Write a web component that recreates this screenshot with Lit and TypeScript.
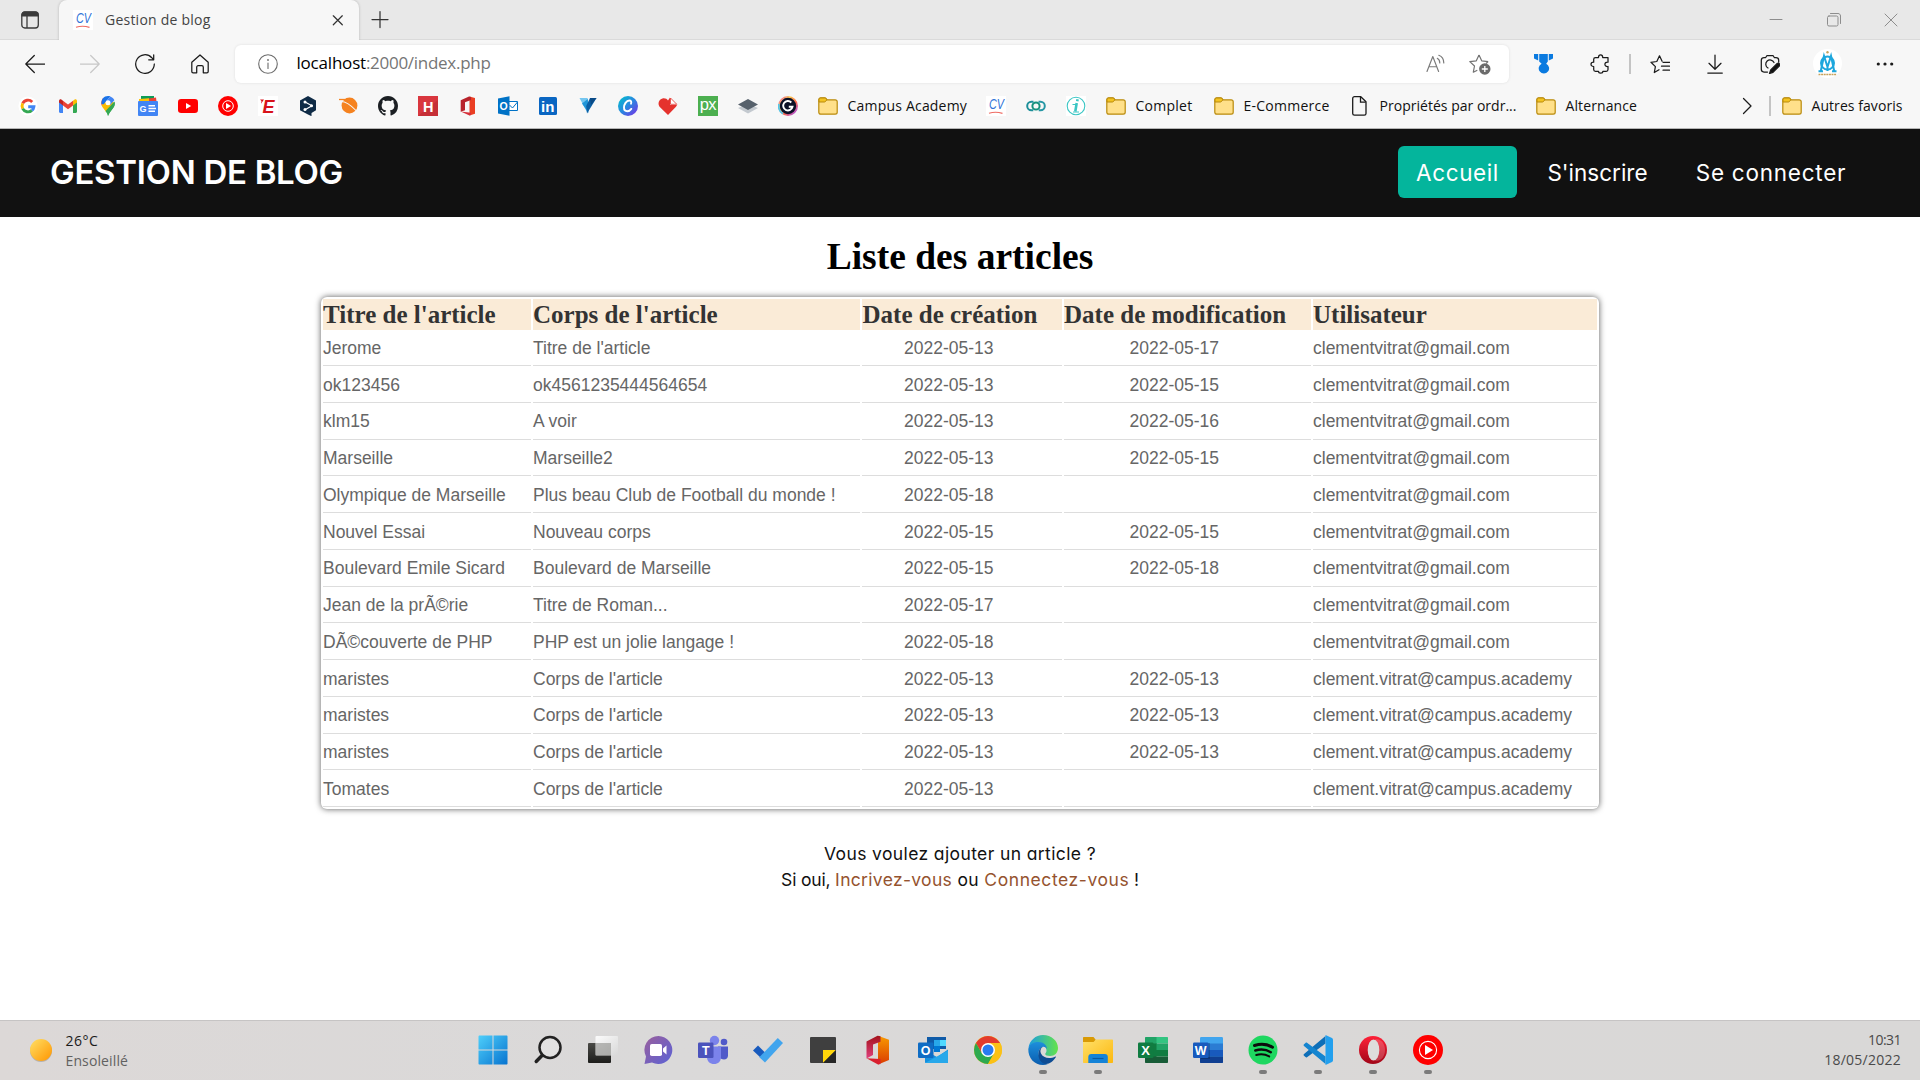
import { LitElement, html, svg, css, nothing } from "lit";
import { customElement } from "lit/decorators.js";

const icon = (size: number, body: unknown, box = size) =>
  html`<svg class="icon" width=${size} height=${size} viewBox="0 0 ${box} ${box}" fill="none">${body}</svg>`;

/* ---------- bookmark icons, 20 x 20 ---------- */
const google = icon(20, svg`<circle cx="10" cy="10" r="9.600" fill="#fff"/><g stroke-width="2.900"><path stroke="#ea4335" d="M14.200 5.900A5.900 5.900 0 0 0 4.700 7.400"/><path stroke="#fbbc05" d="M4.700 7.400a5.900 5.900 0 0 0 0 5.200"/><path stroke="#34a853" d="M4.700 12.600a5.900 5.900 0 0 0 9.200 1.800"/><path stroke="#4285f4" d="M13.900 14.400A5.900 5.900 0 0 0 15.900 10.700H10.200"/></g>`);
const gmail = icon(20, svg`<path fill="#4285f4" d="M1 5.500 5 8.400V17H2.300C1.500 17 1 16.500 1 15.800z"/><path fill="#34a853" d="M19 5.500 15 8.400V17h2.700c.8 0 1.300-.5 1.300-1.200z"/><path fill="#fbbc04" d="M15 4.800 16.400 3.700C17.500 2.900 19 3.600 19 5v1.500L15 9.500z"/><path fill="#c5221f" d="M5 4.800 3.600 3.700C2.500 2.900 1 3.600 1 5v1.500L5 9.500z"/><path fill="#ea4335" d="M5 4.800 10 8.500l5-3.700v4.700l-5 3.800-5-3.800z"/>`);
const maps = icon(20, svg`<path fill="#fbbc04" d="M5.400 11.800 13 3.500l3.300 3.800L8.200 15.300z"/><path fill="#34a853" d="M8 15 16.500 6c.6 2.300-.2 4.300-1.500 6-2 2.800-4 5-5 8-.3-2-1-3.500-2-5z"/><path fill="#ea4335" d="M3.600 9.500C2.800 7 3.500 4.200 5 2.300l3.600 3z"/><path fill="#fbbc04" d="M3.600 9.500 7 6l6 5-4.800 5.300C7 13.500 4.500 12 3.600 9.500z"/><path fill="#34a853" d="M7.500 15 16.500 5.500c.8 2.300.2 4.600-1.500 6.800-2 2.700-4 4.700-5 7.700-.4-2-1.300-3.500-2.500-5z"/><path fill="#1a73e8" d="M5 2.300C6.200.8 8 0 10 0c.8 0 1.600.1 2.300.4L5.600 8.200 3.500 8C3.200 6 3.800 4 5 2.300z"/><path fill="#4285f4" d="M12.300.4c1.900.7 3.300 2 4.100 3.900L12 9 8.200 5.300z"/><circle cx="10" cy="6.700" r="2.500" fill="#fff"/>`);
const gnews = icon(20, svg`<path fill="#0c9d58" d="M3 0h13v6H3z"/><path fill="#ea4335" d="M8 3 18 1.500l.6 5H8z"/><path fill="#ffc107" d="M1 3l10-.8V8H1z"/><rect y="5" width="20" height="15" rx="1" fill="#4285f4"/><text x="1.600" y="15.800" class="g-bold" font-size="9" fill="#fff">G</text><path stroke="#fff" stroke-width="1.600" d="M10.500 9.700H17M10.500 12.500H18M10.500 15.300H17"/>`);
const youtube = icon(20, svg`<rect y="3" width="20" height="14" rx="3.200" fill="#f00"/><path fill="#fff" d="M8 7v6l5.200-3z"/>`);
const ytMusic = icon(20, svg`<circle cx="10" cy="10" r="10" fill="#f00"/><circle cx="10" cy="10" r="5.300" stroke="#fff"/><path fill="#fff" d="M8 7v6l5-3z"/>`);
const equipe = icon(20, svg`<path fill="#fff" d="M0 0h20v20H0z"/><text x="4.500" y="16.500" class="g-bold" font-style="italic" font-size="18" fill="#d8131b">E</text><path fill="#d8131b" d="M2 3.500h4L3 7.800 3.500 5z"/>`);
const deepl = icon(20, svg`<path fill="#0f2b46" d="M10 0l8 4.500v9.800L13.500 17v3.200L10 18.500 2 14.300V4.500z"/><path stroke="#fff" stroke-width="1.100" d="M7 6l7 3.700-7 4"/><g fill="#fff"><circle cx="7" cy="6" r="1.500"/><circle cx="13.500" cy="9.700" r="1.500"/><circle cx="7" cy="13.600" r="1.500"/></g>`);
const saturn = icon(20, svg`<circle cx="11.500" cy="9.500" r="7.900" fill="#f5821f"/><path stroke="#f5821f" stroke-width="1.300" d="M1 3.500h9"/><path stroke="#f7f7f7" stroke-width="1.100" d="M2 5.500C7 5 12 8 18.500 15"/>`);
const github = icon(20, svg`<path fill="#1b1f23" transform="scale(1.25)" d="M8 0C3.580 0 0 3.580 0 8c0 3.540 2.290 6.530 5.470 7.590.4.070.550-.170.550-.380 0-.190-.010-.820-.010-1.490-2.010.370-2.530-.490-2.690-.940-.090-.230-.480-.940-.820-1.130-.280-.150-.680-.520-.010-.530.630-.010 1.080.580 1.230.820.720 1.210 1.870.870 2.330.660.070-.520.280-.870.510-1.070-1.780-.2-3.640-.890-3.640-3.950 0-.870.310-1.590.820-2.150-.080-.2-.360-1.020.080-2.120 0 0 .670-.210 2.200.820.640-.180 1.320-.270 2-.270s1.360.090 2 .270c1.530-1.040 2.200-.820 2.200-.820.440 1.100.160 1.920.080 2.120.510.560.820 1.270.820 2.150 0 3.070-1.870 3.750-3.650 3.950.290.250.540.730.540 1.480 0 1.070-.010 1.930-.010 2.200 0 .210.150.460.550.380A8.010 8.010 0 0 0 16 8c0-4.420-3.580-8-8-8z"/>`);
const hBox = icon(20, svg`<path fill="#d9363e" d="M0 0h20v20H0z"/><path fill="#b3282f" opacity=".5" d="M0 20 20 4v16z"/><text x="5" y="15.500" class="g-bold" font-size="14.500" fill="#fff">H</text>`);
const office = icon(20, svg`<path fill="#ea3e23" d="M11.500.500 17 2.100v15.700L11.500 19.500z"/><path fill="#b8232c" d="M2.700 4.300 11 .600l2 .5v3L7 6.300v8l-4.300 1.500z"/><path fill="#d6303a" d="M2.700 15.600 13 16.800v2.300l-1.500.400z"/>`);
const outlookOld = icon(20, svg`<path fill="#0072c6" d="M0 2.500 11.500.200v19.600L0 17.500z"/><path fill="#fff" stroke="#0072c6" d="M11 5.500h8.500v9H11z"/><path stroke="#0072c6" d="M11.500 9l3 3 5-6"/><text x="1.500" y="13.800" class="g-bold" font-size="10.500" fill="#fff">O</text>`);
const linkedin = icon(20, svg`<rect x="1" y="1" width="18" height="18" rx="1.500" fill="#0a66c2"/><text x="3" y="16" class="g-bold" font-size="15" fill="#fff">in</text>`);
const vFav = icon(20, svg`<path fill="#74c6f0" d="M1.500 2h8l1.500 8-1.500 7z"/><path fill="#2196d8" d="M4 7.500 9.800 3l.7 14z"/><path fill="#0b5fa5" d="M9 17.500 18.500 2H12l-3.800 8z"/><path fill="#0a4a86" d="M12 2h6.500L13 9z"/>`);
const canva = icon(20, svg`<defs><linearGradient id="cv" x1="0" y1="0" x2="1" y2="1"><stop stop-color="#00c4cc"/><stop offset=".5" stop-color="#2a86e0"/><stop offset="1" stop-color="#7d2ae8"/></linearGradient></defs><circle cx="10" cy="10" r="10" fill="url(#cv)"/><path stroke="#fff" stroke-width="1.900" stroke-linecap="round" d="M13 7.700C13.800 5.500 12.800 4.500 11.300 4.500 8.300 4.500 6 8.500 6 11.500c0 2.300 1.300 3.700 3.200 3.700 1.700 0 3.200-1 4.100-2.300"/>`);
const heart = icon(20, svg`<path fill="#e5322d" d="M10 19 1.800 11C-.5 8.500.3 3.500 4.500 2.500 7 2 9 3 10 4.500l2-3V9h7c-.3 1-1 1.700-1.500 2.300z"/><path fill="#fff" stroke="#e5322d" stroke-width=".8" d="M12.500 2 18.800 8.300h-6.300z"/>`);
const px = icon(20, svg`<path fill="#4caf50" d="M0 0h20v20H0z"/><text x="1.700" y="14.300" font-family="Liberation Sans" font-size="16.500" letter-spacing="-.6" fill="#fff">px</text>`);
const layers = icon(20, svg`<path fill="#c3c9cf" d="M0 12l10 5.500L20 12l-10-4z"/><path fill="#56616c" d="M0 8.500 10 3l10 5.500-10 5.500z"/>`);
const gRing = icon(20, svg`<defs><linearGradient id="rg" x1="0" y1="0" x2="1" y2="1"><stop stop-color="#f04fb1"/><stop offset=".3" stop-color="#f9c74f"/><stop offset=".6" stop-color="#ff6b4a"/><stop offset="1" stop-color="#9b4dff"/></linearGradient></defs><circle cx="10" cy="10" r="9.100" fill="#0b1026" stroke="url(#rg)" stroke-width="1.800"/><path stroke="#54c7ec" stroke-width="1.800" d="M1 8A9.100 9.100 0 0 0 5 17.700"/><path stroke="#fff" stroke-width="1.900" d="M13.300 6.500A4.700 4.700 0 1 0 14.500 10.700h-3.700"/>`);
const folder = icon(20, svg`<path fill="#ffe08a" stroke="#b98a0c" stroke-width="1.200" d="M.8 3.800C.8 2.500 1.500 1.900 2.700 1.900h4c.8 0 1.200.3 1.600.9l.6 1h8.200c1.300 0 2.100.7 2.100 2v10.500c0 1.200-.8 1.900-2.100 1.900H2.900c-1.300 0-2.100-.7-2.100-1.900z"/><path fill="#f3c321" stroke="#b98a0c" stroke-width="1" d="M1 6V3.800C1 2.600 1.700 2 2.800 2h3.900c.8 0 1.200.3 1.500.8l.6 1L7.500 5.500c-.3.4-.7.500-1.200.5z"/>`);
const cvFav = icon(20, svg`<path fill="#fff" d="M0 0h20v20H0z"/><text x="3" y="12.500" font-family="Liberation Sans" font-style="italic" font-size="14.500" textLength="15" lengthAdjust="spacingAndGlyphs" fill="#2f73d8">CV</text><path stroke="#ef6b63" stroke-width="1.200" d="M3 17.300c4-1.300 9-1.300 13.500 0"/>`);
const rings = icon(20, svg`<g stroke-width="2"><circle cx="10" cy="10" r="3.600" stroke="#16917c"/><path stroke="#1d8f9a" d="M7.500 5.800H5.400a4.200 4.200 0 0 0 0 8.400h1.900"/><path stroke="#2697a5" d="M12.500 5.800h2.100a4.200 4.200 0 0 1 0 8.400h-1.900"/></g>`);
const iTeal = icon(20, svg`<path fill="#fff" d="M0 0h20v20H0z"/><circle cx="10" cy="10" r="8.800" stroke="#3cc6c4" stroke-width="1.100"/><path stroke="#3cc6c4" stroke-width="2.600" d="M10.700 7 9.300 15.500M11.600 3.200l-.4 2"/><path stroke="#3cc6c4" stroke-width="1" d="M6.500 8.500h4M7 16h6"/>`);
const page = icon(20, svg`<path stroke="#1b1b1b" stroke-width="1.300" stroke-linejoin="round" d="M4.500.7h6.300l5.200 5v11.800c0 1-.7 1.700-1.700 1.700H4.500c-1 0-1.800-.7-1.800-1.700V2.400c0-1 .8-1.700 1.800-1.700z"/><path stroke="#1b1b1b" stroke-width="1.300" d="M10.500.9v5.200h5.300"/>`);

/* ---------- toolbar icons ---------- */
const ink = "#1b1b1b";
const line = (body: unknown, color = ink, w = 1.25, size = 20) =>
  icon(size, svg`<g stroke=${color} stroke-width=${w} stroke-linecap="round" stroke-linejoin="round">${body}</g>`);
const tabActions = icon(20, svg`<rect x="1.800" y="2" width="16.500" height="16" rx="3" stroke="#3b3b3b" stroke-width="1.300"/><path fill="#3b3b3b" d="M1.500 6.500V4.500C1.500 2.800 2.800 1.500 4.500 1.500h11c1.700 0 3 1.300 3 3v2z"/><path stroke="#3b3b3b" stroke-width="1.300" d="M7 6v12"/>`);
const closeTab = line(svg`<path d="M5.300 5.800l9 9M14.300 5.800l-9 9"/>`, "#333");
const plus = line(svg`<path d="M10 1.500v16M2 9.500h16"/>`, "#333");
const back = line(svg`<path d="M19.500 10H.8M9.300 1.500.8 10l8.500 8.500"/>`);
const forward = line(svg`<path d="M.5 10h18.700M10.700 1.500 19.200 10l-8.500 8.500"/>`, "#c8c8c8");
const reload = line(svg`<path d="M19.300 10A9.300 9.300 0 1 1 16.800 3.700l1.500 1.700M18.700.8v5h-5"/>`);
const home = line(svg`<path d="M1.800 8.300 10 1l8.200 7.300v9.200c0 .8-.5 1.300-1.300 1.300h-3.600v-5.500c0-1-.6-1.600-1.500-1.600H8.200c-.9 0-1.500.6-1.500 1.600v5.500H3.100c-.8 0-1.300-.5-1.300-1.300z"/>`);
const info = line(svg`<circle cx="10" cy="10" r="9.300"/><path d="M10 9v5.500"/><path stroke-width="1.800" d="M10 5.900v.1"/>`, "#6b6b6b", 1.1);
const readAloud = line(svg`<path d="M1 17.500 6.800 2.500l5.800 15M3 12.700h7.700M11.300 4.300c1.700.9 2.500 2.600 2.500 4.700M12.800 1.300c3.300 1.200 5 3.900 5 7.700"/>`, "#7a7a7a", 1.15);
const starAdd = html`<svg class="icon" width="24" height="24" viewBox="0 0 24 24" fill="none"><path stroke="#737373" stroke-width="1.200" stroke-linejoin="round" d="M11 3l2.700 5.800 6.500.8M11 3 8.300 8.800l-6.500.8 4.700 4.400-1.200 6.200 4-2M20 9.700l-2 1.800"/><circle cx="16.800" cy="17" r="5.700" fill="#6b6b6b"/><path stroke="#fff" stroke-width="1.300" d="M16.800 14v6M13.800 17h6"/></svg>`;
const medal = icon(22, svg`<path fill="#0a7ae0" d="M1 1h4.200v6.500L1 5.500zM6.200 1h8.600v7.500l-1.600 2.200a5.200 5.200 0 1 1-4.600 0L6.200 8.500zM15.800 1H20v4.500l-4.200 2z"/>`);
const puzzle = line(svg`<path d="M5.500 3.500h3c0-1.800.8-2.700 2.100-2.700s2.100.9 2.100 2.700H18v4.700c-2-.2-3.100.6-3.100 2.100s1.100 2.400 3.100 2.200v3c0 1.200-.6 1.800-1.800 1.800h-3.300c0 1.200-.9 1.900-2.200 1.900s-2.200-.7-2.200-1.900H5.500c-1.200 0-1.800-.6-1.800-1.800v-3C2 12.500 1 11.600 1 10.300s1-2.100 2.700-2.100V5.300c0-1.200.6-1.800 1.800-1.800z"/>`);
const favs = line(svg`<path d="M9 15.700l-4.700 2.800 1.100-5.900L1 8.300l5.800-.8L9.500 1.800l2.600 5.500M13 8.300h6.500M11.500 12.200h8M13 16.200h6.500"/>`);
const download = line(svg`<path d="M10 1v14M4 9.300l6 6 6-6M2.800 19h14.500"/>`);
const capture = line(svg`<path d="M7.500 18H4c-1.500 0-2.700-1-2.700-2.700V6.200C1.300 4.700 2.500 3.500 4 3.500h1.700L7 1.500h6l1.300 2H16c1.500 0 2.700 1.200 2.700 2.700v2M8 14A4.300 4.300 0 1 1 14 8.500"/><path fill="#111" d="M17.200 9.500c1.500-1 3.300.8 2.300 2.300l-6.500 6.500-3.500 1.200 1.200-3.500z"/>`);
const avatar = icon(29, svg`<circle cx="14.500" cy="14.500" r="14.500" fill="#fff"/><circle cx="14.500" cy="3.300" r="1.200" fill="#c7a25c"/><g stroke="#1ea7dd"><circle cx="14.500" cy="14" r="6.500" stroke-width="2"/><path stroke-width="2" d="M7.800 22 11 7l3.500 11L18 7l3.200 15M5.500 22.300h4.500M19 22.300h4.500M14.500 18v4"/></g><path stroke="#c7a25c" stroke-width="1.300" stroke-dasharray="2 .6" d="M5.500 25.500h18"/>`);
const dots = icon(20, svg`<g fill="#1b1b1b"><circle cx="3.300" cy="10" r="1.600"/><circle cx="10" cy="10" r="1.600"/><circle cx="16.700" cy="10" r="1.600"/></g>`);
const chevron = line(svg`<path d="M6.500 2.500 14 10l-7.500 7.500"/>`);
const winMin = line(svg`<path d="M4 9.500h12"/>`, "#8d8d8d", 1);
const winMax = line(svg`<rect x="3.500" y="6" width="10.500" height="10" rx="1.500"/><path d="M6.500 3.500H14c1.400 0 2.500 1 2.500 2.500v7.500"/>`, "#8d8d8d", 1);
const winClose = line(svg`<path d="M4 4l12 12M16 4 4 16"/>`, "#8d8d8d", 1);

/* ---------- taskbar icons, 30 x 30 ---------- */
const lg = (id: string, a: string, b: string, dir = "d") =>
  svg`<linearGradient id=${id} x1="0" y1="0" x2=${dir === "v" ? 0 : 1} y2=${dir === "h" ? 0 : 1}><stop stop-color=${a}/><stop offset="1" stop-color=${b}/></linearGradient>`;
const start = icon(30, svg`<defs><linearGradient id="st" gradientUnits="userSpaceOnUse" x1="0" y1="0" x2="30" y2="30"><stop stop-color="#4fd0fb"/><stop offset="1" stop-color="#0672cf"/></linearGradient></defs><path fill="url(#st)" d="M.5 1.500C.5 1 1 .5 1.500.5h13v14H.5zM15.500.5h13c.6 0 1 .4 1 1v13h-14zM.5 15.500h14v14h-13c-.6 0-1-.4-1-1zM15.500 15.500h14v13c0 .6-.4 1-1 1h-13z"/>`);
const search = icon(30, svg`<circle cx="17" cy="12.500" r="10.500" fill="#e6e6e6" fill-opacity=".6" stroke="#222" stroke-width="2.500"/><path stroke="#222" stroke-width="3.400" stroke-linecap="round" d="M9 20.500 3.200 26.500"/>`);
const taskView = icon(30, svg`<defs>${lg("tv", "#4a4a46", "#1d1d1b", "v")}${lg("tw", "#fff", "#d8d8d8")}</defs><rect y="8" width="23" height="20" rx="1" fill="url(#tv)"/><rect x="7.500" y="1" width="22.500" height="19.500" rx="1" fill="url(#tw)" fill-opacity=".9"/><path fill="#8f8f8d" opacity=".55" d="M7.500 8H23v12.500H7.500z"/>`);
const chat = icon(30, svg`<defs>${lg("ch", "#9a5f9c", "#5b62d6")}</defs><path fill="url(#ch)" d="M15.500 1A14 14 0 1 1 9 27.500L1.500 29 3 21.500A14 14 0 0 1 15.500 1z"/><rect x="7" y="9" width="12" height="12" rx="1.800" fill="#fff"/><path fill="#fff" d="M20 13.500l3.500-3v9l-3.500-3z"/>`);
const teams = icon(30, svg`<circle cx="16.500" cy="5.500" r="4.700" fill="#7b83eb"/><circle cx="26" cy="7" r="3.300" fill="#5059c9"/><path fill="#5059c9" d="M20 11.500h10v9c0 2.500-1.800 4-4 4s-4-1-5-3z"/><path fill="#7b83eb" d="M9 11.500h14V22c0 4.500-3 7-7 7s-7-2.500-7-7z"/><rect y="7.500" width="15.500" height="15.500" rx="1.200" fill="#4b53bc"/><text x="7.700" y="19.800" text-anchor="middle" class="g-bold" font-size="12.500" fill="#fff">T</text>`);
const todo = icon(30, svg`<path fill="#185abd" d="M0 15.500l5-5 8 8-3.500 6z"/><path fill="#41a5ee" d="M6.300 22.200 24.800 3l5.200 5L12 27.500z"/>`);
const sticky = icon(30, svg`<rect x="2" y="2" width="26" height="26" rx="1" fill="#3f3f3f"/><path fill="#ffd60a" d="M15 15h13L15 28z"/><path fill="#262626" d="M28 15v13H15z"/>`);
const officeBig = icon(30, svg`<defs>${lg("of", "#a4131c", "#e0407e", "v")}${lg("og", "#f89a00", "#da3b01", "v")}</defs><path fill="url(#og)" d="M15 .8l11 4V25L15 29.500z"/><path fill="url(#of)" d="M3.500 6.500 14.500.8l3 .5v5.500L10 9.500v10.500l-6.500 3.500z"/><path fill="#d9202f" d="M3.500 23.300 17.500 24v5l-2.500.5z"/>`);
const outlook = icon(30, svg`<path fill="#0f5ba8" d="M9 2h19v12H9z"/><path fill="#28a8ea" d="M16 5h6v6h-6z"/><path fill="#50d9ff" d="M22 5h6v6h-6z"/><path fill="#0078d4" d="M16 11h6v6h-6z"/><path fill="#1490df" d="M7 15.500 19 22l11-7.500V27c0 .6-.4 1-1 1H8c-.6 0-1-.4-1-1z"/><path fill="#28a8ea" d="M7 28 30 15.500V27c0 .6-.4 1-1 1z"/><rect y="7.500" width="15.500" height="15.500" rx="1.200" fill="#0f6cc4"/><text x="7.700" y="19.700" text-anchor="middle" class="g-bold" font-size="12.500" fill="#fff">O</text>`);
const chrome = icon(30, svg`<circle cx="15" cy="15" r="14" fill="#fbc116"/><path fill="#e33b2e" d="M2.900 8A14 14 0 0 1 27.100 8H15L9 18.500z"/><path fill="#2da94f" d="M2.900 8A14 14 0 0 0 15 29l6-10.500H9z"/><path fill="#fbc116" d="M27.100 8A14 14 0 0 1 15 29l6-10.500L15 8z"/><circle cx="15" cy="15" r="7" fill="#fff"/><circle cx="15" cy="15" r="5.500" fill="#2a7bf0"/>`);
const edge = icon(30, svg`<defs>${lg("e1", "#1b9de2", "#63e34a", "h")}${lg("e2", "#1d8fdc", "#0a5cae", "v")}</defs><path fill="url(#e1)" d="M.5 12.500C1.700 5.500 7.500 0 15 0c8.500 0 15 6 15 13 0 5-3.500 8-7.800 8-3.200 0-5-1-5-2 0-.7 1.300-1.300 1.300-3.500 0-3.500-3.500-6.300-8-6.300-5 0-8.500 1.500-10 3.300z"/><path fill="url(#e2)" d="M.3 14C1 9.500 5.500 7 10.300 7c5.500 0 8.700 3.500 8.700 7-1-1.500-3-2.500-4.500-2-3 1-4.500 4.500-3.500 8.500 1 4.500 5 8 9 8.500-1.500.7-3.300 1-5 1C6.500 30 0 23 .3 14z"/><path fill="#0e4c93" d="M10.500 18.500C11 13 14 12 14.500 12c-2 1.500-2.700 4-1.500 6.500 2 4.500 8.500 6 14.500 3 .5 0 .5.500.3.800C25.500 26 22 29 18 29c-4.500-.5-8-4.500-7.500-10.500z"/>`);
const explorer = icon(30, svg`<defs>${lg("fo", "#ffe069", "#fcb80f")}</defs><path fill="#d99a05" d="M0 3c0-.6.4-1 1-1h9.500l2 2.500V8H0z"/><path fill="url(#fo)" d="M0 7h10.500l2.500-2.500h16c.6 0 1 .4 1 1V27c0 .6-.4 1-1 1H1c-.6 0-1-.4-1-1z"/><path fill="#1583d7" d="M5.300 28v-6c0-2 1-3 3-3h13.500c2 0 3 1 3 3v6z"/><path stroke="#0c5aa0" stroke-width="1.200" d="M9.500 23.500h11"/>`);
const excel = icon(30, svg`<path fill="#21a366" d="M7 3c0-.6.4-1 1-1h11v13H7z"/><path fill="#33c481" d="M18.500 2H29c.6 0 1 .4 1 1v5.500H18.500z"/><path fill="#21a366" d="M18.500 8.500H30V15H18.500z"/><path fill="#185c37" d="M7 15h11.500v6.500H30V27c0 .6-.4 1-1 1H8c-.6 0-1-.4-1-1z"/><path fill="#107c41" d="M18.500 15H30v6.500H18.500zM7 8.500h11.500V21.500H7z"/><rect y="7.500" width="15.500" height="15.500" rx="1.200" fill="#107c41"/><text x="7.700" y="19.800" text-anchor="middle" class="g-bold" font-size="13" fill="#fff">X</text>`);
const word = icon(30, svg`<rect x="7" y="2" width="23" height="26" rx="1.200" fill="#41a5ee"/><path fill="#2b7cd3" d="M7 8.500h23V15H7z"/><path fill="#185abd" d="M7 15h23v6.500H7z"/><path fill="#103f91" d="M7 21.500h23V27c0 .6-.4 1-1 1H8c-.6 0-1-.4-1-1z"/><path fill="#000" opacity=".2" d="M8 8h9v16H8z"/><rect y="7.500" width="15.500" height="15.500" rx="1.200" fill="#185abd"/><text x="7.700" y="19.800" text-anchor="middle" class="g-bold" font-size="12.500" fill="#fff">W</text>`);
const spotify = icon(30, svg`<circle cx="15" cy="15" r="14.500" fill="#1ed760"/><g stroke="#0c0c0c" stroke-linecap="round"><path stroke-width="3" d="M6.500 10.500c6-1.800 13-1.200 18 1.700"/><path stroke-width="2.500" d="M7.300 15.500c5-1.500 11-1 15.500 1.700"/><path stroke-width="2" d="M8.200 20c4.500-1.200 9-.8 13 1.400"/></g>`);
const vscode = icon(30, svg`<path fill="#0e6fb8" d="M22.500 1 1 19c-.6.6-.6 1.200 0 1.700l1.500 1.400c.5.400 1 .4 1.500.1L22.500 8.500z"/><path fill="#1585d0" d="M22.500 29 1 11c-.6-.6-.6-1.200 0-1.700l1.500-1.400c.5-.4 1-.4 1.500-.1L22.500 21.500z"/><path fill="#23a0ee" d="M22.500 0 29 3c.6.3 1 .9 1 1.500v21c0 .6-.4 1.200-1 1.500l-6.500 3z"/>`);
const opera = icon(30, svg`<defs>${lg("op", "#ff2138", "#a10618", "v")}</defs><circle cx="15" cy="15" r="14" fill="url(#op)"/><path fill="#fff" opacity=".2" d="M17 4.500C23 3 27 9 27 15s-4 12-10 10.500z"/><ellipse cx="15.500" cy="15" rx="5.800" ry="10.500" fill="#dedcdc"/>`);
const music = icon(30, svg`<circle cx="15" cy="15" r="15" fill="#f00"/><circle cx="15" cy="15" r="8.600" stroke="#fff" stroke-width="1.100"/><path fill="#fff" d="M12 10v10l8-5z"/>`);
const sun = icon(26, svg`<defs>${lg("su", "#ffe066", "#ff9500")}</defs><circle cx="13" cy="14" r="11" fill="#000" opacity=".18"/><circle cx="13" cy="13" r="11" fill="url(#su)"/>`);

type Bookmark = { art: unknown; label?: string; cls?: string };
const bookmarks: Bookmark[] = [
  ...[google, gmail, maps, gnews, youtube, ytMusic, equipe, deepl, saturn, github, hBox, office, outlookOld,
    linkedin, vFav, canva, heart, px, layers, gRing].map((art) => ({ art })),
  { art: folder, label: "Campus Academy", cls: "b-campus" },
  { art: cvFav }, { art: rings }, { art: iTeal },
  { art: folder, label: "Complet", cls: "b-complet" },
  { art: folder, label: "E-Commerce", cls: "b-ecom" },
  { art: page, label: "Propriétés par ordr...", cls: "b-prop" },
  { art: folder, label: "Alternance", cls: "b-alt" },
];

const G = "clementvitrat@gmail.com";
const C = "clement.vitrat@campus.academy";
const articles: string[][] = [
  ["Jerome", "Titre de l'article", "2022-05-13", "2022-05-17", G],
  ["ok123456", "ok4561235444564654", "2022-05-13", "2022-05-15", G],
  ["klm15", "A voir", "2022-05-13", "2022-05-16", G],
  ["Marseille", "Marseille2", "2022-05-13", "2022-05-15", G],
  ["Olympique de Marseille", "Plus beau Club de Football du monde !", "2022-05-18", "", G],
  ["Nouvel Essai", "Nouveau corps", "2022-05-15", "2022-05-15", G],
  ["Boulevard Emile Sicard", "Boulevard de Marseille", "2022-05-15", "2022-05-18", G],
  ["Jean de la prÃ©rie", "Titre de Roman...", "2022-05-17", "", G],
  ["DÃ©couverte de PHP", "PHP est un jolie langage !", "2022-05-18", "", G],
  ["maristes", "Corps de l'article", "2022-05-13", "2022-05-13", C],
  ["maristes", "Corps de l'article", "2022-05-13", "2022-05-13", C],
  ["maristes", "Corps de l'article", "2022-05-13", "2022-05-13", C],
  ["Tomates", "Corps de l'article", "2022-05-13", "", C],
];
const headings = ["Titre de l'article", "Corps de l'article", "Date de création", "Date de modification", "Utilisateur"];

const apps: { art: unknown; open?: boolean }[] = [
  { art: start }, { art: search }, { art: taskView }, { art: chat }, { art: teams }, { art: todo }, { art: sticky },
  { art: officeBig }, { art: outlook }, { art: chrome }, { art: edge, open: true }, { art: explorer, open: true },
  { art: excel }, { art: word }, { art: spotify, open: true }, { art: vscode, open: true }, { art: opera, open: true },
  { art: music, open: true },
];

@customElement("app-root")
export class AppRoot extends LitElement {
  static styles = css`
    :host { display: flex; flex-direction: column; width: 1920px; height: 1080px; overflow: hidden; background: #fff;
      font-family: "Open Sans", "Noto Sans", sans-serif; font-size: 14px; color: #1b1b1b; }
    * { box-sizing: border-box; }
    .icon { display: block; flex: none; }
    .g-bold { font-family: "Liberation Sans", sans-serif; font-weight: 700; }
    .cell { display: flex; align-items: center; justify-content: center; flex: none; white-space: nowrap; }
    .grow { flex: 1; }

    .tabs { display: flex; flex: none; height: 40px; background: #e8e8e8; box-shadow: inset 0 -1px #dadada; }
    .tab-menu { width: 59px; }
    .tab { display: flex; align-items: center; width: 300px; padding: 0 11px 0 14px; border-radius: 8px 8px 0 0;
      background: #f7f7f7; box-shadow: 0 0 3px rgba(0,0,0,.22); clip-path: inset(0 -4px 0 -4px); }
    .tab-title { flex: 1; margin-left: 12px; padding-bottom: 1px; white-space: nowrap; color: #444; letter-spacing: .23px; }
    .new-tab { width: 42px; }
    .win { width: 57.500px; }

    .toolbar { display: flex; flex: none; height: 47px; background: #f7f7f7; padding-left: 7.500px; }
    .nav { width: 55px; }
    .address { display: flex; flex: none; align-items: center; width: 1274px; height: 38px; margin: 5px 0 0 7.500px; border-radius: 6px;
      background: #fff; box-shadow: 0 0 3px rgba(0,0,0,.1); padding: 0 17px 1px 22.500px; }
    .url { flex: 1; margin-left: 19px; padding-bottom: 2px; font-size: 17px; letter-spacing: -.28px; color: #757575; white-space: nowrap; }
    .host { color: #000; letter-spacing: -.2px; }
    .a-read { margin-right: 22px; }
    .t-medal { width: 70px; }
    .t-puzzle { width: 42px; }
    .sep { flex: none; width: 2px; height: 20px; background: #c4c4c4; align-self: center; }
    .t-sep { margin: 0 9px 0 8px; }
    .t-fav { width: 40px; margin-right: 7px; }
    .t-wide { width: 55px; }
    .t-av { width: 61px; }
    .t-dots { width: 53px; }

    .bookmarks { display: flex; flex: none; align-items: center; height: 42px; padding: 0 10px 4px 8px; background: #f7f7f7; border-bottom: 1px solid #b5b5b5; }
    .bm { display: flex; align-items: center; flex: none; height: 36px; width: 40px; padding-left: 10px; gap: 9.500px; white-space: nowrap; color: #111; }
    .b-campus { width: 168px; letter-spacing: .2px; }
    .b-complet { width: 108px; letter-spacing: .26px; }
    .b-ecom { width: 136px; letter-spacing: .24px; }
    .b-prop { width: 186px; letter-spacing: .02px; }
    .b-alt { width: 140px; letter-spacing: .1px; }
    .b-more { margin-right: 12px; }
    .b-other { width: 139px; padding-left: 11px; letter-spacing: .06px; }

    .site-head { display: flex; flex: none; align-items: center; height: 88px; padding: 0 56px 2px 50px; background: #111; color: #fff;
      font-family: "Inter", sans-serif; font-feature-settings: "cv11"; }
    .logo { flex: 1; font-size: 33px; font-weight: 600; letter-spacing: -.3px; }
    .link { display: flex; align-items: center; justify-content: center; height: 52px; border-radius: 6px; font-size: 22.500px; white-space: nowrap; }
    .l-home { width: 119px; background: #04b59c; letter-spacing: .62px; }
    .l-join { width: 161px; }
    .l-sign { width: 186px; letter-spacing: .75px; }

    .page { display: flex; flex: none; flex-direction: column; align-items: center; height: 803px; }
    .title { flex: none; margin: 0; height: 80px; padding-top: 18px; font: 700 37.500px/43px "Liberation Serif", serif; color: #000; }
    .table { flex: none; width: 1278px; height: 512px; padding: 2px 0 0 1.500px; border-radius: 6px; background: #fff;
      box-shadow: 0 0 6px rgba(0,0,0,.65); }
    .row { display: grid; grid-template-columns: 208px 327.500px 199.500px 247px 284px; column-gap: 2px; height: 36.750px;
      font: 17.500px/20px "Liberation Sans", sans-serif; color: #666; }
    .row > div { border-bottom: 1px solid #ddd; padding: 8.500px 0 0 .5px; white-space: nowrap; }
    .row > .d1 { padding-left: 42px; }
    .row > .d2 { padding-left: 66px; }
    .row.first { height: 36px; }
    .row.first > div { padding-top: 7.500px; }
    .row.head { height: 31px; font: 700 25px/29px "Liberation Serif", serif; color: #333; }
    .row.head > div { border: 0; background: #faebd7; padding: 1px 0 0 .5px; }
    .ask { margin-top: 32px; text-align: center; font: 17.500px/26px "Inter", sans-serif; font-feature-settings: "cv11";
      letter-spacing: .38px; color: #111; white-space: pre; }
    .si { letter-spacing: -.18px; }
    .lk { letter-spacing: .32px; color: #95532f; }
    .lk2 { letter-spacing: .57px; color: #95532f; }

    .taskbar { display: flex; flex: none; height: 60px; background: linear-gradient(90deg, #dcd8d7, #dad9d9 35%, #dad8d7 60%, #d9d8d7);
      border-top: 1px solid #c6c4c4; }
    .weather { display: flex; width: 465px; padding: 16px 0 0 28px; gap: 11.500px; }
    .lines { line-height: 20px; margin-top: -6px; color: #1b1b1b; letter-spacing: .5px; }
    .dim { color: #616161; letter-spacing: .12px; }
    .app { display: flex; flex-direction: column; align-items: center; width: 55px; padding-top: 14px; }
    .pill { width: 8px; height: 4px; margin-top: 5px; border-radius: 2px; background: #7b7b7b; }
    .clock { flex: 1; text-align: right; padding: 9px 19px 0 0; line-height: 20px; color: #4a4a4a; letter-spacing: .25px; }
    .time { letter-spacing: -.54px; }
  `;

  render() {
    return html`
      <div class="tabs">
        <div class="cell tab-menu">${tabActions}</div>
        <div class="tab">${cvFav}<span class="tab-title">Gestion de blog</span>${closeTab}</div>
        <div class="cell new-tab">${plus}</div>
        <div class="grow"></div>
        <div class="cell win">${winMin}</div><div class="cell win">${winMax}</div><div class="cell win">${winClose}</div>
      </div>
      <div class="toolbar">
        ${[back, forward, reload, home].map((i) => html`<div class="cell nav">${i}</div>`)}
        <div class="address">${info}
          <div class="url"><span class="host">localhost</span>:2000/index.php</div>
          <div class="a-read">${readAloud}</div>${starAdd}
        </div>
        <div class="cell t-medal">${medal}</div><div class="cell t-puzzle">${puzzle}</div>
        <div class="sep t-sep"></div>
        <div class="cell t-fav">${favs}</div><div class="cell t-wide">${download}</div><div class="cell t-wide">${capture}</div>
        <div class="cell t-av">${avatar}</div><div class="cell t-dots">${dots}</div>
      </div>
      <div class="bookmarks">
        ${bookmarks.map((b) => html`<div class="bm ${b.cls ?? ""}">${b.art}${b.label ? html`<span>${b.label}</span>` : nothing}</div>`)}
        <div class="grow"></div>
        <div class="b-more">${chevron}</div><div class="sep"></div>
        <div class="bm b-other">${folder}<span>Autres favoris</span></div>
      </div>
      <div class="site-head">
        <div class="logo">GESTION DE BLOG</div>
        <div class="link l-home">Accueil</div>
        <div class="link l-join">S'inscrire</div>
        <div class="link l-sign">Se connecter</div>
      </div>
      <div class="page">
        <h1 class="title">Liste des articles</h1>
        <div class="table">
          <div class="row head">${headings.map((h) => html`<div>${h}</div>`)}</div>
          ${articles.map((a, i) => html`<div class="row ${i ? "" : "first"}">
            ${a.map((v, c) => html`<div class=${c === 2 ? "d1" : c === 3 ? "d2" : ""}>${v}</div>`)}</div>`)}
        </div>
        <div class="ask"><div>Vous voulez ajouter un article ?</div><div><span class="si">Si oui, </span><span class="lk">Incrivez-vous</span> ou <span class="lk2">Connectez-vous</span><span class="si"> !</span></div></div>
      </div>
      <div class="taskbar">
        <div class="weather">${sun}<div class="lines"><div>26°C</div><div class="dim">Ensoleillé</div></div></div>
        ${apps.map((a) => html`<div class="app">${a.art}${a.open ? html`<div class="pill"></div>` : nothing}</div>`)}
        <div class="clock"><div class="time">10:31</div><div>18/05/2022</div></div>
      </div>
    `;
  }
}
